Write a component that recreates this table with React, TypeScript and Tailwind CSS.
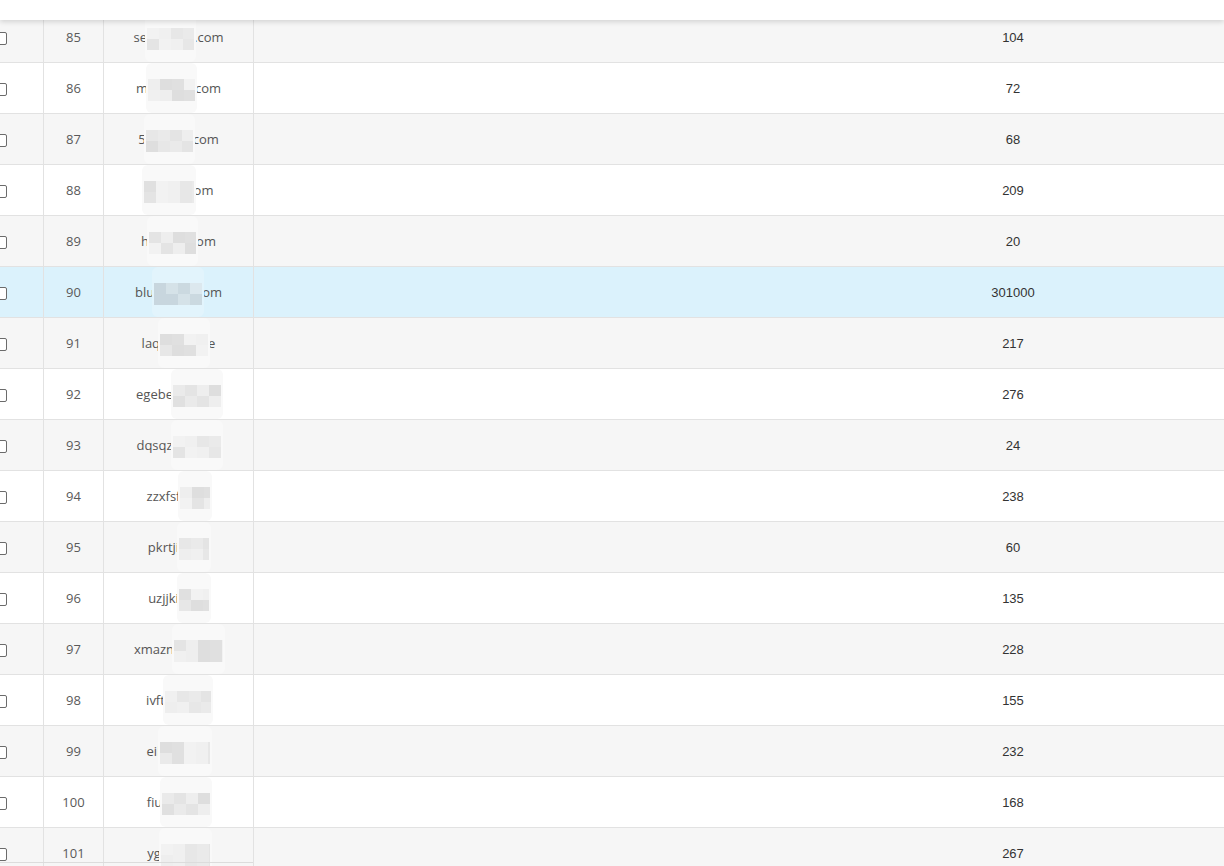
import React from 'react'

type Row = {
  id: number
  pre: string
  blur: number
  post: string
  count: string
}

const rows: Row[] = [
  { id: 85, pre: 'se', blur: 47, post: '.com', count: '104' },
  { id: 86, pre: 'm', blur: 47, post: 'com', count: '72' },
  { id: 87, pre: '5', blur: 47, post: 'com', count: '68' },
  { id: 88, pre: '', blur: 50, post: 'om', count: '209' },
  { id: 89, pre: 'h', blur: 47, post: 'om', count: '20' },
  { id: 90, pre: 'blu', blur: 48, post: 'om', count: '301000' },
  { id: 91, pre: 'laq', blur: 48, post: 'e', count: '217' },
  { id: 92, pre: 'egebe', blur: 48, post: '', count: '276' },
  { id: 93, pre: 'dqsqz', blur: 48, post: '', count: '24' },
  { id: 94, pre: 'zzxfsf', blur: 30, post: '', count: '238' },
  { id: 95, pre: 'pkrtji', blur: 30, post: '', count: '60' },
  { id: 96, pre: 'uzjjki', blur: 30, post: '', count: '135' },
  { id: 97, pre: 'xmazn', blur: 49, post: '', count: '228' },
  { id: 98, pre: 'ivft', blur: 46, post: '', count: '155' },
  { id: 99, pre: 'eil', blur: 50, post: '', count: '232' },
  { id: 100, pre: 'fiu', blur: 48, post: '', count: '168' },
  { id: 101, pre: 'yg', blur: 49, post: '', count: '267' },
]

const grays = ['#e0e0e0', '#e7e7e7', '#eeeeee', '#f2f2f2', '#eaeaea', '#dedede', '#f0f0f0', '#e4e4e4']
const blues = ['#cbd9e0', '#d5e2e8', '#c8d6de', '#dce8ee']

// pixelated patch that hides part of the domain
function Mosaic({ width, seed, blue }: { width: number; seed: number; blue: boolean }) {
  const cols = Math.ceil(width / 12)
  const palette = blue ? blues : grays
  const cells: string[] = []
  for (let i = 0; i < cols * 2; i++) {
    cells.push(palette[(seed * 7 + i * 3 + (i > cols ? 1 : 0)) % palette.length])
  }
  return (
    <span className="relative inline-block h-[14px] align-middle" style={{ width }}>
      <span
        className={`absolute left-[-2px] right-[-2px] top-[-20px] h-[50px] rounded-md ${
          blue ? 'bg-[#e2f4fc]' : 'bg-[#f9f9f9]'
        }`}
      />
      <span
        className="absolute left-0 top-[-4px] grid h-[22px] overflow-hidden"
        style={{ width, gridTemplateColumns: `repeat(${cols}, 12px)` }}
      >
        {cells.map((c, i) => (
          <span key={i} className="h-[11px] w-[12px]" style={{ background: c }} />
        ))}
      </span>
    </span>
  )
}

export default function App() {
  return (
    <div className="relative h-[866px] w-full overflow-hidden bg-white font-['Open_Sans',sans-serif] text-[13px]">
      {/* sticky header strip */}
      <div className="absolute left-0 right-0 top-0 z-10 h-5 bg-white shadow-[0_2px_5px_rgba(0,0,0,0.14)]" />

      <div className="pt-[12px]">
        {rows.map((r, i) => {
          const active = r.id === 90
          const bg = active ? 'bg-[#dbf2fc]' : i % 2 === 0 ? 'bg-[#f6f6f6]' : 'bg-white'
          return (
            <div key={r.id} className={`flex h-[51px] w-[1773px] border-b border-[#e2e2e2] ${bg}`}>
              <div className="flex w-[44px] shrink-0 items-center border-r border-[#e2e2e2] pt-[2px]">
                <div className="ml-[-6px] h-[13px] w-[13px] rounded-[2px] border border-[#6b6b6b] bg-white" />
              </div>
              <div className="flex w-[60px] shrink-0 items-center justify-center border-r border-[#e2e2e2] pt-[2px] text-[#5a5a5a]">
                {r.id}
              </div>
              <div className="flex w-[150px] shrink-0 items-center justify-center border-r border-[#e2e2e2] pt-[2px] text-[#555]">
                <span className="whitespace-nowrap">
                  {r.pre}
                  <Mosaic width={r.blur} seed={r.id} blue={active} />
                  {r.post}
                </span>
              </div>
              <div className="flex w-[1518px] shrink-0 items-center justify-center pt-[2px] font-['Liberation_Sans',Arial,sans-serif] text-[#333]">
                {r.count}
              </div>
            </div>
          )
        })}
      </div>

      {/* fixed columns bottom edge */}
      <div className="absolute bottom-[3px] left-0 h-px w-[253px] bg-[#dcdcdc]" />
    </div>
  )
}
